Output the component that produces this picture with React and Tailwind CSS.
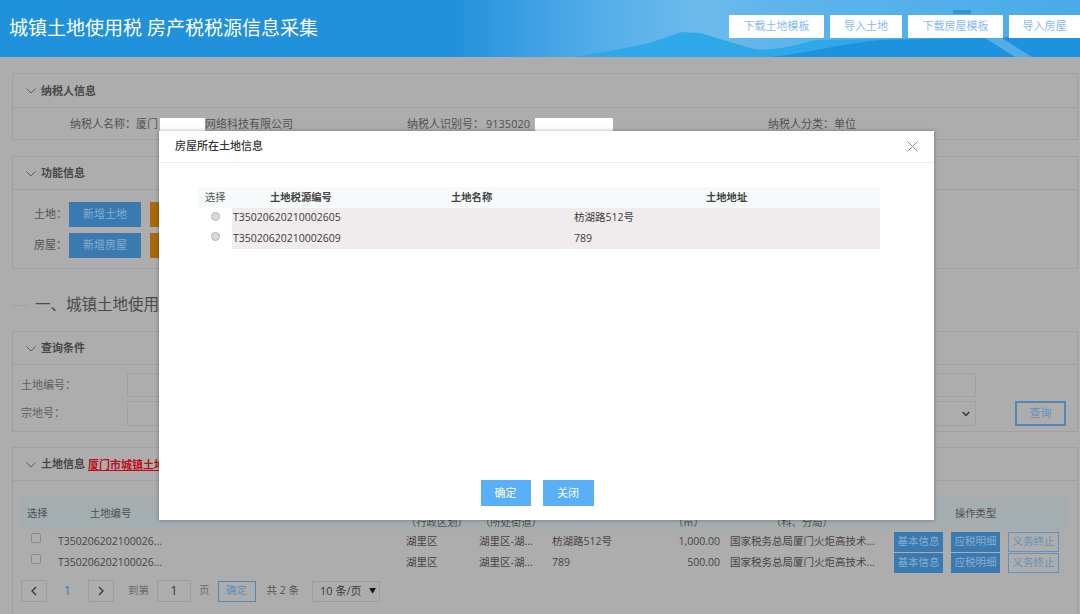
const cjk = "font-['Open_Sans','Noto_Sans_CJK_SC',sans-serif]";

function Chevron() {
  return (
    <svg width="10" height="6" viewBox="0 0 10 6" className="shrink-0">
      <path d="M0.5 0.5 L5 5 L9.5 0.5" fill="none" stroke="#555" strokeWidth="0.9" />
    </svg>
  );
}

function PanelHead({ title, h, children }) {
  return (
    <div className={`flex items-center gap-[5px] pl-[13px] pt-[1px] border-b border-[#a0a0a0] ${h}`}>
      <Chevron />
      <span className="text-[11px] font-bold text-[#474747]">{title}</span>
      {children}
    </div>
  );
}

function Header() {
  const btns = [
    ["下载土地模板", "w-[95px]"],
    ["导入土地", "w-[72px]"],
    ["下载房屋模板", "w-[95px]"],
    ["导入房屋", "w-[71px]"],
  ];
  return (
    <header className="relative h-[57px] overflow-hidden bg-[linear-gradient(90deg,#2091db_0%,#2291db_42%,#56aee9_56%,#6cbbec_65%,#5fb4eb_72%,#49abe8_100%)]">
      <svg className="absolute inset-0" width="1080" height="57" viewBox="0 0 1080 57">
        <path d="M574 57 L620 49 L650 43 L681 32 L700 33 L730 42 L754 49 C770 51 790 47 816 40 L1080 36 L1080 57 Z" fill="#2ea8e8" />
        <path d="M770 57 C810 53 840 44 880 40 L1080 36 L1080 57 Z" fill="#1d92de" />
        <path d="M985 38 L1000 37 L1032 57 L1015 57 Z" fill="#7fc2ee" opacity="0.55" />
        <rect x="953" y="10" width="18" height="4" fill="#2f95d6" />
      </svg>
      <div className="relative flex h-full items-start justify-between pl-[9px]">
        <h1 className="mt-[14px] text-[19px] leading-[28px] text-white">城镇土地使用税 房产税税源信息采集</h1>
        <div className="mt-[15px] flex gap-[6px]">
          {btns.map(([t, w]) => (
            <button key={t} className={`h-[23px] bg-white text-[11px] text-[#86bcf0] ${w}`}>{t}</button>
          ))}
        </div>
      </div>
    </header>
  );
}

function Redact({ w }) {
  return <span className={`inline-block h-[14px] bg-white align-middle ${w}`} />;
}

function TaxpayerPanel() {
  return (
    <section className="h-[67px] border border-[#a0a0a0]">
      <PanelHead title="纳税人信息" h="h-[34px]" />
      <div className="flex h-[32px] items-center text-[11px] text-[#515151]">
        <span className="ml-[57px] w-[337px] whitespace-nowrap">纳税人名称：厦门<span className="ml-[2px]"><Redact w="w-[45px]" /></span>网络科技有限公司</span>
        <span className="w-[361px] whitespace-nowrap">纳税人识别号：<span className="ml-[2px]">9135020</span><span className="ml-[5px]"><Redact w="w-[78px]" /></span></span>
        <span className="whitespace-nowrap">纳税人分类：单位</span>
      </div>
    </section>
  );
}

function FnRow({ label, text }) {
  return (
    <div className="flex items-center">
      <span className="w-[56px] whitespace-nowrap pl-[21px] text-[11px] text-[#515151]">{label}</span>
      <button className="h-[25px] w-[72px] bg-[#3a7ab0] text-[11px] text-[#86aed0]">{text}</button>
      <span className="ml-[9px] h-[25px] w-[60px] bg-[#ab680c]" />
    </div>
  );
}

function FunctionPanel() {
  return (
    <section className="mt-[16px] h-[113px] border border-[#a0a0a0]">
      <PanelHead title="功能信息" h="h-[33px]" />
      <div className="flex flex-col gap-[6px] pt-[12px]">
        <FnRow label="土地：" text="新增土地" />
        <FnRow label="房屋：" text="新增房屋" />
      </div>
    </section>
  );
}

function SectionTitle() {
  return (
    <div className="mt-[24px] flex h-[24px] items-center">
      <span className="h-px w-[16px] bg-[#a0a0a0]" />
      <span className="ml-[7px] text-[15.5px] text-[#4a4a4a] whitespace-nowrap">一、城镇土地使用税</span>
    </div>
  );
}

function QueryPanel() {
  return (
    <section className="mt-[14px] h-[101px] border border-[#a0a0a0]">
      <PanelHead title="查询条件" h="h-[33px]" />
      <div className="flex flex-col gap-[4px] pt-[8px] pl-[8px]">
        <div className="flex items-center">
          <span className="w-[106px] text-[11px] text-[#5f5f5f]">土地编号：</span>
          <span className="h-[24px] w-[849px] border border-[#a2a2a2]" />
        </div>
        <div className="flex items-center">
          <span className="w-[106px] text-[11px] text-[#5f5f5f]">宗地号：</span>
          <span className="flex h-[25px] w-[849px] items-center justify-end border border-[#a2a2a2] pr-[5px]">
            <svg width="8" height="6" viewBox="0 0 8 6"><path d="M0.8 1 L4 4.4 L7.2 1" fill="none" stroke="#333" strokeWidth="1.4" /></svg>
          </span>
          <button className="ml-[39px] h-[25px] w-[51px] border-2 border-[#5288b8] text-[11px] text-[#5f90ba]">查询</button>
        </div>
      </div>
    </section>
  );
}

const thCell = "text-[10.3px] text-[#4f4f4f]";

function LandRow({ road, area }) {
  return (
    <div className="flex h-[21px] items-center text-[10.5px] text-[#444] whitespace-nowrap">
      <span className="ml-[10px] mt-[-7px] h-[10px] w-[10px] rounded-[2px] border border-[#8b8b8b] bg-[#b0b0b0]" />
      <span className="ml-[17px] w-[348px]">T350206202100026...</span>
      <span className="w-[73px]">湖里区</span>
      <span className="w-[73px]">湖里区-湖...</span>
      <span className="w-[100px]">{road}</span>
      <span className="w-[68px] text-right">{area}</span>
      <span className="ml-[10px] w-[164px]">国家税务总局厦门火炬高技术...</span>
      <button className="h-[20px] w-[49px] bg-[#3a7ab0] text-[#86aed0]">基本信息</button>
      <button className="ml-[8px] h-[20px] w-[49px] bg-[#3a7ab0] text-[#86aed0]">应税明细</button>
      <button className="ml-[8px] h-[20px] w-[51px] border border-[#6292bc] text-[#6292bc]">义务终止</button>
    </div>
  );
}

function Pager() {
  const box = "flex items-center justify-center border border-[#9c9c9c]";
  return (
    <div className="mt-[7px] flex items-center text-[10.5px] text-[#6a6a6a] whitespace-nowrap">
      <button className={`${box} h-[22px] w-[26px] text-[#333]`}>
        <svg width="6" height="10" viewBox="0 0 6 10"><path d="M5 1 L1 5 L5 9" fill="none" stroke="#333" strokeWidth="1.3" /></svg>
      </button>
      <span className="w-[41px] text-center text-[12px] text-[#3a7ab0]">1</span>
      <button className={`${box} h-[22px] w-[26px]`}>
        <svg width="6" height="10" viewBox="0 0 6 10"><path d="M1 1 L5 5 L1 9" fill="none" stroke="#333" strokeWidth="1.3" /></svg>
      </button>
      <span className="ml-[14px]">到第</span>
      <span className={`${box} ml-[8px] h-[22px] w-[34px] text-[12px] text-[#333]`}>1</span>
      <span className="ml-[8px]">页</span>
      <button className="ml-[8px] h-[21px] w-[38px] border border-[#5288b8] text-[#5f90ba]">确定</button>
      <span className="ml-[11px] text-[#555]">共 2 条</span>
      <span className="ml-[13px] flex h-[21px] w-[68px] items-center justify-between border border-[#9c9c9c] pl-[7px] pr-[3px] text-[11px] text-[#3a3a3a]">
        <span>10 条/页</span>
        <span className="text-[7px] text-[#111]">▼</span>
      </span>
    </div>
  );
}

function LandPanel() {
  return (
    <section className="mt-[15px] h-[300px] border border-[#a0a0a0]">
      <PanelHead title="土地信息" h="h-[33px]">
        <span className="mt-[1px] -ml-[2px] text-[11px] font-bold text-[#bc0f1a] underline whitespace-nowrap">厦门市城镇土地使用税</span>
      </PanelHead>
      <div className="px-[8px] pt-[17px]">
        <div className="relative flex h-[32px] items-center bg-[#a4aeb0]">
          <span className={`${thCell} ml-[6px] w-[63px]`}>选择</span>
          <span className={`${thCell} w-[320px]`}>土地编号</span>
          <span className={`${thCell} absolute left-[385px] top-[17px] whitespace-nowrap`}>（行政区划）</span>
          <span className={`${thCell} absolute left-[459px] top-[17px] whitespace-nowrap`}>（所处街道）</span>
          <span className={`${thCell} absolute left-[652px] top-[17px] whitespace-nowrap`}>（㎡）</span>
          <span className={`${thCell} absolute left-[750px] top-[17px] whitespace-nowrap`}>（科、分局）</span>
          <span className={`${thCell} absolute left-[934px]`}>操作类型</span>
        </div>
        <div className="mt-[1px]">
          <LandRow road="枋湖路512号" area="1,000.00" />
          <LandRow road="789" area="500.00" />
        </div>
        <Pager />
      </div>
    </section>
  );
}

function Radio() {
  return <span className="mx-auto mt-[-4px] block h-[9px] w-[9px] rounded-full border border-[#b5b5b5] bg-[#d9d9d9]" />;
}

function Modal() {
  const rows = [
    ["T35020620210002605", "枋湖路512号"],
    ["T35020620210002609", "789"],
  ];
  return (
    <div className="absolute left-[159px] top-[131px] flex h-[389px] w-[775px] flex-col bg-white shadow-[0_0_4px_rgba(0,0,0,0.35)]">
      <div className="flex h-[32px] shrink-0 items-center justify-between border-b border-[#ececec] pl-[16px] pr-[16px]">
        <span className="text-[11px] font-medium text-[#333]">房屋所在土地信息</span>
        <svg width="11" height="11" viewBox="0 0 11 11"><path d="M0.5 0.5 L10.5 10.5 M10.5 0.5 L0.5 10.5" stroke="#8a8a8a" strokeWidth="1" /></svg>
      </div>
      <div className="ml-[39px] mt-[24px] w-[682px] text-[10.5px] text-[#3a3a3a]">
        <div className="flex h-[21px] items-center bg-[#f6fafb] text-[10.3px]">
          <span className="ml-[7px] w-[65px] text-[#555]">选择</span>
          <span className="w-[181px] whitespace-nowrap font-bold text-[#444]">土地税源编号</span>
          <span className="w-[255px] font-bold text-[#444]">土地名称</span>
          <span className="font-bold text-[#444]">土地地址</span>
        </div>
        {rows.map(([id, addr]) => (
          <div key={id} className="flex h-[20.5px] items-center">
            <span className="w-[34px] bg-white"><Radio /></span>
            <div className="flex h-full flex-1 items-center bg-[#f0eced] pl-[1px]">
              <span className="w-[341px] text-[10.5px]">{id}</span>
              <span>{addr}</span>
            </div>
          </div>
        ))}
      </div>
      <div className="mt-auto mb-[14px] flex justify-center gap-[12px] pr-[19px]">
        <button className="h-[26px] w-[50px] bg-[#5ab0f6] text-[11px] text-white">确定</button>
        <button className="h-[26px] w-[51px] bg-[#5ab0f6] text-[11px] text-white">关闭</button>
      </div>
    </div>
  );
}

export default function App() {
  return (
    <div className={`relative h-[614px] w-[1080px] overflow-hidden bg-[#adadad] ${cjk}`}>
      <Header />
      <main className="ml-[12px] mr-[2px] pt-[16px]">
        <TaxpayerPanel />
        <FunctionPanel />
        <SectionTitle />
        <QueryPanel />
        <LandPanel />
      </main>
      <Modal />
    </div>
  );
}
